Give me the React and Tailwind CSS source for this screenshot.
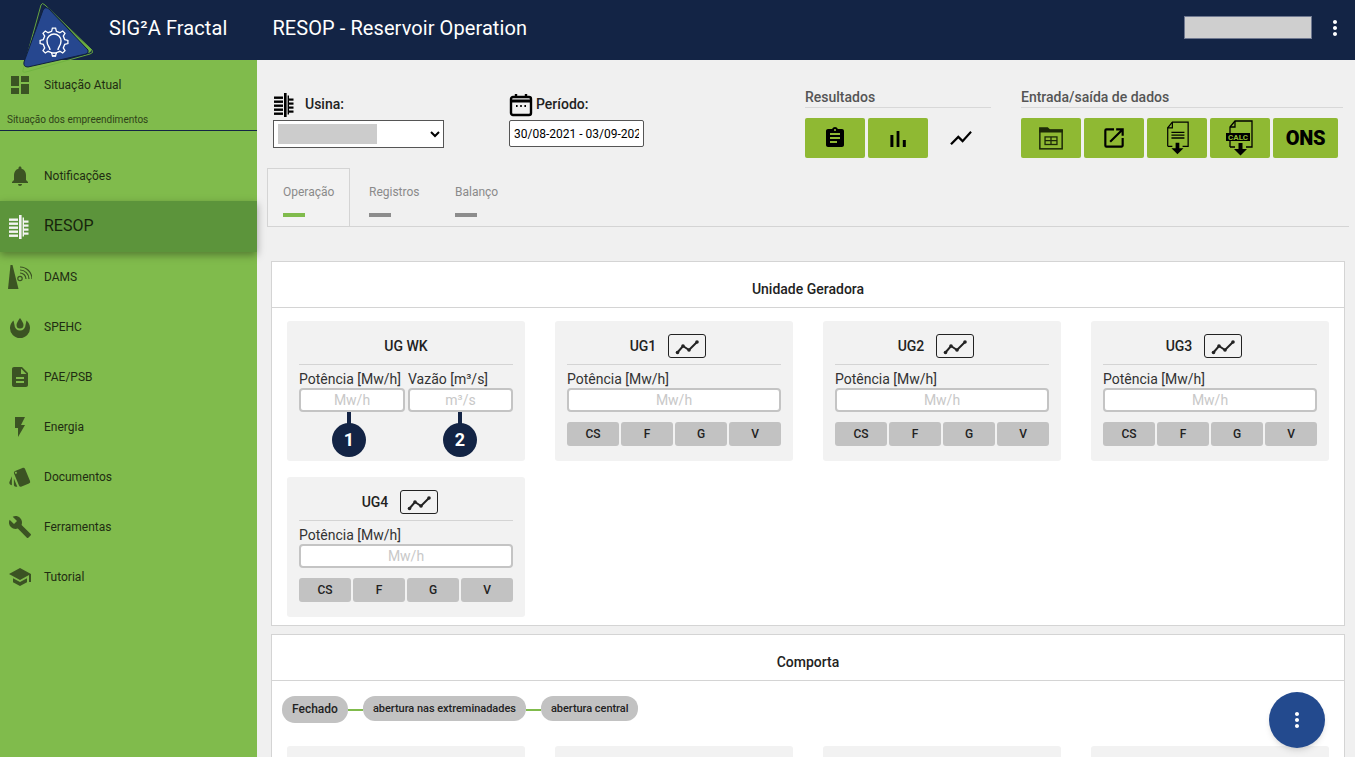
import React from "react";
import {
  MdDashboard,
  MdNotifications,
  MdDescription,
  MdFlashOn,
  MdStyle,
  MdBuild,
  MdSchool,
  MdMoreVert,
  MdAssignment,
  MdShowChart,
  MdOutlineOpenInNew,
} from "react-icons/md";

const ResopIcon = ({ className }) => (
  <svg viewBox="0 0 24 24" className={className} fill="currentColor">
    <rect x="11" y="0" width="2.6" height="24" />
    <rect x="14.6" y="2.5" width="1.4" height="19" />
    {[3.5, 7.5, 11.5, 15.5, 19.5].map((y) => (
      <rect key={y} x="1" y={y} width="9" height="2.4" />
    ))}
    {[5.5, 9.5, 13.5, 17.5].map((y) => (
      <rect key={y} x="16" y={y} width="4.5" height="2.2" />
    ))}
  </svg>
);

const DamsIcon = ({ className }) => (
  <svg viewBox="0 0 24 24" className={className} fill="none" stroke="currentColor">
    <path d="M2.5 0 L4.5 0 L10.5 24 L0 24 Z" fill="currentColor" stroke="none" />
    <circle cx="12" cy="13.5" r="2.2" strokeWidth="1.2" />
    <path d="M12 8 A6 6 0 0 1 18 14" strokeWidth="1.2" />
    <path d="M12 5 A9 9 0 0 1 21 14" strokeWidth="1.2" />
    <path d="M12 2 A12 12 0 0 1 24 14" strokeWidth="1.2" />
  </svg>
);

const SpehcIcon = ({ className }) => (
  <svg viewBox="0 0 24 24" className={className} fill="currentColor">
    <path d="M12 3 C14 6 15.5 8 15.5 10 A3.5 3.5 0 0 1 8.5 10 C8.5 8 10 6 12 3 Z" />
    <path d="M5.5 5.5 A10 10 0 1 0 18.5 5.5 L17.5 10 A5.5 5.5 0 1 1 6.5 10 Z" />
  </svg>
);

const CalendarIcon = ({ className }) => (
  <svg viewBox="0 0 24 24" className={className} fill="none" stroke="currentColor" strokeWidth="2.4">
    <rect x="2" y="4" width="20" height="18" rx="2" />
    <path d="M2 8 H22" strokeWidth="3" />
    <path d="M7 1 V5 M17 1 V5" />
    <path d="M7 13 H8.6 M11.2 13 H12.8 M15.4 13 H17" strokeWidth="2" />
  </svg>
);

const BarsIcon = ({ className }) => (
  <svg viewBox="0 0 24 24" className={className} fill="currentColor">
    <rect x="4.4" y="9" width="3" height="12" />
    <rect x="10.6" y="5" width="2.8" height="16" />
    <rect x="16.8" y="14" width="3" height="7" />
  </svg>
);

const FolderTableIcon = ({ className }) => (
  <svg viewBox="0 0 24 24" className={className} fill="none" stroke="currentColor">
    <path d="M1 2 H9 L11 4 H23 V7 H1 Z" fill="currentColor" stroke="none" />
    <rect x="1.7" y="5" width="20.6" height="17" strokeWidth="1.4" />
    <rect x="6.5" y="11" width="11" height="7" strokeWidth="1.2" />
    <path d="M6.5 14.5 H17.5 M12 11 V18" strokeWidth="1.2" />
  </svg>
);

const FileDownIcon = ({ className, calc }) => (
  <svg viewBox="0 0 28 36" className={className} fill="none" stroke="currentColor">
    <path d="M4 27 V7 L9 1 H26 V27 H20 M9 27 H4" strokeWidth="1.3" />
    <path d="M4 7 H9 V1" strokeWidth="1.3" />
    {calc ? (
      <>
        <rect x="0" y="13" width="24" height="8" fill="currentColor" stroke="none" />
        <text x="12" y="19.8" fontSize="8" fontWeight="700" fill="#8fb933" stroke="none" textAnchor="middle" fontFamily="Roboto, sans-serif">
          CALC
        </text>
      </>
    ) : (
      <path d="M8 12 H22 M8 15 H22 M8 18 H22" strokeWidth="1.4" />
    )}
    <path d="M12.5 23 H16.5 V29 H21 L14.5 35.5 L8 29 H12.5 Z" fill="currentColor" stroke="none" />
  </svg>
);

const LineBoxIcon = ({ className }) => (
  <svg viewBox="0 0 24 18" className={className} fill="currentColor">
    <path d="M2 16 L8 9 L14 13 L22 5" fill="none" stroke="currentColor" strokeWidth="2" />
    <circle cx="2.5" cy="15.5" r="1.8" />
    <circle cx="8" cy="9" r="1.8" />
    <circle cx="14" cy="13" r="1.8" />
    <circle cx="22" cy="5" r="1.8" />
  </svg>
);

const menu = [
  { label: "Notificações", Icon: MdNotifications },
  { label: "RESOP", Icon: ResopIcon, active: true },
  { label: "DAMS", Icon: DamsIcon },
  { label: "SPEHC", Icon: SpehcIcon },
  { label: "PAE/PSB", Icon: MdDescription },
  { label: "Energia", Icon: MdFlashOn },
  { label: "Documentos", Icon: MdStyle },
  { label: "Ferramentas", Icon: MdBuild },
  { label: "Tutorial", Icon: MdSchool },
];

function MenuItem({ label, Icon, active }) {
  if (active) {
    return (
      <div className="relative flex items-center h-[51px] bg-[#5c943b] shadow-[0_3px_8px_rgba(0,0,0,0.35)]">
        <div className="w-[44px] flex justify-center pr-[5px]">
          <Icon className="w-[24px] h-[24px] text-[#f4f4f4]" />
        </div>
        <span className="text-[16px] text-[#17240c] -mt-[1px]">{label}</span>
      </div>
    );
  }
  return (
    <div className="flex items-center h-[50px]">
      <div className="w-[38px] flex justify-center pl-[1px]">
        <Icon className="w-[24px] h-[24px] text-[#3b5323]" />
      </div>
      <span className="ml-[6px] text-[12px] text-[#1f2d12]">{label}</span>
    </div>
  );
}

function Sidebar() {
  return (
    <aside className="w-[257px] shrink-0 bg-[#80bb4c] flex flex-col">
      <div className="flex items-center h-[50px]">
        <div className="w-[38px] flex justify-center pl-[1px]">
          <MdDashboard className="w-[24px] h-[24px] text-[#3b5323]" />
        </div>
        <span className="ml-[6px] text-[12px] text-[#1f2d12]">Situação Atual</span>
      </div>
      <div className="h-[21px] pl-[7px] text-[10px] leading-[19px] text-[#2f4319] border-b border-[#132445]">
        Situação dos empreendimentos
      </div>
      <div className="mt-[20px]">
        {menu.map((item) => (
          <MenuItem key={item.label} {...item} />
        ))}
      </div>
    </aside>
  );
}

// contorno da engrenagem do logo
const gearPoints = () => {
  const pts = [];
  const teeth = 8;
  for (let i = 0; i < teeth; i++) {
    const a = (i / teeth) * Math.PI * 2;
    const step = Math.PI / teeth;
    [
      [-0.55, 11],
      [-0.3, 14],
      [0.3, 14],
      [0.55, 11],
    ].forEach(([d, r]) => {
      const ang = a + d * step;
      pts.push(`${(54 + Math.cos(ang) * r).toFixed(1)},${(42 + Math.sin(ang) * r).toFixed(1)}`);
    });
  }
  return pts.join(" ");
};

function Logo() {
  return (
    <svg viewBox="0 0 100 76" className="absolute left-0 top-0 w-[100px] h-[76px] z-10">
      <path d="M23 70 L41 5 Q42 2 45 5 L92 50 Q94 53 90 54 L26 72 Q22 73 23 70 Z" fill="none" stroke="#6fb33f" strokeWidth="0.9" />
      <path d="M46 8 L91 49 Q92 52 88 53 Z" fill="#6fb33f" />
      <path d="M24 62 L43 10 Q45 6 49 9 L88 50 Q89 53 86 54 L28 67 Q23 67 24 62 Z" fill="#26478f" stroke="#10203f" strokeWidth="1" />
      <polygon points={gearPoints()} fill="none" stroke="#ffffff" strokeWidth="1.3" />
      <g fill="none" stroke="#ffffff" strokeWidth="1.4">
        <path d="M50 50 C50 47 47 46 47 41 A7 7 0 0 1 61 41 C61 46 58 47 58 50" />
        <path d="M51 53 H57 M52 56 H56" />
      </g>
    </svg>
  );
}

function Header() {
  return (
    <header className="relative h-[60px] shrink-0 bg-[#132445] flex items-center text-white">
      <Logo />
      <span className="ml-[109px] text-[20px] tracking-[0.1px] -mt-[4px]">SIG²A Fractal</span>
      <span className="ml-[45px] text-[20px] tracking-[0.08px] -mt-[4px]">RESOP - Reservoir Operation</span>
      <div className="ml-auto -mt-[5px] w-[128px] h-[23px] bg-[#cfcfcf] border border-[#6f7890]" />
      <MdMoreVert className="w-[24px] h-[24px] ml-[11px] mr-[8px] -mt-[5px]" />
    </header>
  );
}

function GreenButton({ children, wide }) {
  return (
    <div className={`${wide ? "w-[65px]" : "w-[60px]"} h-[40px] bg-[#8fb933] rounded-[2px] flex items-center justify-center text-black`}>
      {children}
    </div>
  );
}

function Toolbar() {
  return (
    <div className="flex items-start pl-[16px] pt-[30px] h-[108px]">
      <div className="w-[236px]">
        <div className="flex items-center h-[30px]">
          <ResopIcon className="w-[24px] h-[24px] text-black" />
          <span className="ml-[8px] text-[14px] font-medium text-[#222] -mt-[2px]">Usina:</span>
        </div>
        <div className="relative w-[171px]">
          <select className="w-[171px] h-[28px] bg-white border border-[#555] text-[13px] pl-1 block">
            <option></option>
          </select>
          <div className="absolute left-[5px] top-[4px] w-[99px] h-[20px] bg-[#cccccc]" />
        </div>
      </div>
      <div className="w-[296px]">
        <div className="flex items-center h-[30px]">
          <CalendarIcon className="w-[24px] h-[26px] text-black" />
          <span className="ml-[3px] text-[14px] font-medium text-[#222] -mt-[2px]">Período:</span>
        </div>
        <input
          readOnly
          value="30/08-2021 - 03/09-2021"
          className="w-[135px] h-[27px] bg-white border border-[#555] rounded-[2px] text-[12px] pl-[4px] pr-[4px] text-black"
        />
      </div>
      <div className="w-[216px]">
        <div className="w-[186px] h-[18px] mb-[10px] border-b border-[#d8d8d8] text-[14px] leading-[15px] font-medium text-[#555]">
          Resultados
        </div>
        <div className="flex gap-[3px]">
          <GreenButton><MdAssignment className="w-[24px] h-[24px]" /></GreenButton>
          <GreenButton><BarsIcon className="w-[24px] h-[24px]" /></GreenButton>
          <div className="w-[60px] h-[40px] flex items-center justify-center text-black">
            <MdShowChart className="w-[26px] h-[26px]" />
          </div>
        </div>
      </div>
      <div className="w-[322px]">
        <div className="h-[18px] mb-[10px] border-b border-[#d8d8d8] text-[14px] leading-[15px] font-medium text-[#555]">
          Entrada/saída de dados
        </div>
        <div className="flex gap-[3px]">
          <GreenButton><FolderTableIcon className="w-[26px] h-[26px] text-[#1d2a08]" /></GreenButton>
          <GreenButton><MdOutlineOpenInNew className="w-[26px] h-[26px]" /></GreenButton>
          <GreenButton><FileDownIcon className="w-[26px] h-[34px]" /></GreenButton>
          <GreenButton><FileDownIcon calc className="w-[28px] h-[36px]" /></GreenButton>
          <GreenButton wide><span className="text-[20px] font-black tracking-[-0.3px]">ONS</span></GreenButton>
        </div>
      </div>
    </div>
  );
}

function Tab({ label, active }) {
  return (
    <div
      className={
        active
          ? "w-[83px] h-[58px] pl-[15px] pt-[16px] border border-b-0 border-[#d4d4d4] bg-[#f2f2f2] -mb-px relative"
          : "w-[86px] h-[58px] pl-[19px] pt-[17px]"
      }
    >
      <div className="text-[12px] leading-[15px] text-[#8a8a8a]">{label}</div>
      <div className={`w-[22px] h-[4px] mt-[13px] ${active ? "bg-[#80bb4c]" : "bg-[#8c8c8c]"}`} />
    </div>
  );
}

function Tabs() {
  return (
    <div className="flex ml-[10px] mr-[6px] border-b border-[#d4d4d4]">
      <Tab label="Operação" active />
      <Tab label="Registros" />
      <Tab label="Balanço" />
    </div>
  );
}

function UnitTile({ name }) {
  return (
    <div className="w-[238px] h-[140px] bg-[#f2f2f2] rounded-[3px] px-[12px]">
      <div className="h-[44px] flex items-center justify-center gap-[12px] border-b border-[#d4d4d4] pt-[6px] pr-[12px]">
        <span className="text-[14px] font-medium text-[#222] mt-[2px]">{name}</span>
        <div className="w-[38px] h-[24px] border border-[#222] rounded-[3px] flex items-center justify-center">
          <LineBoxIcon className="w-[24px] h-[18px] text-[#222]" />
        </div>
      </div>
      <div className="mt-[6px] text-[14px] leading-[16px] text-[#333]">Potência [Mw/h]</div>
      <div className="mt-[1px] h-[24px] bg-white border-2 border-[#c4c4c4] rounded-[4px] text-center text-[14px] leading-[20px] text-[#c8c8c8]">
        Mw/h
      </div>
      <div className="mt-[10px] grid grid-cols-4 gap-[2px]">
        {["CS", "F", "G", "V"].map((b) => (
          <div key={b} className="h-[24px] bg-[#c2c2c2] rounded-[3px] text-center text-[12px] leading-[24px] font-medium text-[#222]">
            {b}
          </div>
        ))}
      </div>
    </div>
  );
}

function Callout({ n, label, unit, className, markClass }) {
  return (
    <div className={`relative ${className}`}>
      <div className="mt-[6px] text-[14px] leading-[16px] text-[#333] whitespace-nowrap">{label}</div>
      <div className="mt-[1px] h-[24px] bg-white border-2 border-[#c4c4c4] rounded-[4px] text-center text-[14px] leading-[20px] text-[#c8c8c8]">
        {unit}
      </div>
      <div className={`absolute -translate-x-1/2 top-[47px] w-[4px] h-[14px] bg-[#132445] ${markClass}`} />
      <div className={`absolute -translate-x-1/2 top-[58px] w-[34px] h-[34px] rounded-full bg-[#132445] text-white text-[18px] font-bold leading-[34px] text-center ${markClass}`}>
        {n}
      </div>
    </div>
  );
}

function WkTile() {
  return (
    <div className="w-[238px] h-[140px] bg-[#f2f2f2] rounded-[3px] px-[12px]">
      <div className="h-[44px] flex items-center justify-center border-b border-[#d4d4d4] pt-[8px]">
        <span className="text-[14px] font-medium text-[#222]">UG WK</span>
      </div>
      <div className="flex gap-[3px]">
        <Callout n="1" label="Potência [Mw/h]" unit="Mw/h" className="w-[106px]" markClass="left-[50px]" />
        <Callout n="2" label="Vazão [m³/s]" unit="m³/s" className="w-[105px]" markClass="left-[52px]" />
      </div>
    </div>
  );
}

function Card({ title, children, className }) {
  return (
    <section className={`bg-white border border-[#d4d4d4] ml-[14px] mr-[10px] ${className}`}>
      <div className="h-[46px] border-b border-[#d4d4d4] flex items-center justify-center text-[14px] font-medium text-[#222] pt-[9px]">
        {title}
      </div>
      {children}
    </section>
  );
}

function Content() {
  return (
    <main className="flex-1 min-w-0 bg-[#f0f0f0] overflow-hidden">
      <Toolbar />
      <Tabs />
      <Card title="Unidade Geradora" className="mt-[34px] h-[365px]">
        <div className="pl-[15px] pt-[13px] flex flex-wrap gap-x-[30px] gap-y-[16px]">
          <WkTile />
          <UnitTile name="UG1" />
          <UnitTile name="UG2" />
          <UnitTile name="UG3" />
          <UnitTile name="UG4" />
        </div>
      </Card>
      <Card title="Comporta" className="mt-[8px]">
        <div className="pl-[10px] pt-[15px] flex items-start">
          <div className="h-[27px] px-[10px] bg-[#c2c2c2] rounded-[13px] text-[12px] leading-[26px] font-medium text-[#222]">Fechado</div>
          <div className="w-[15px] h-[2px] bg-[#80bb4c] mt-[13px]" />
          <div className="h-[25px] px-[10px] bg-[#c2c2c2] rounded-[12px] text-[11px] leading-[25px] font-medium text-[#222] tracking-[-0.03px]">abertura nas extreminadades</div>
          <div className="w-[15px] h-[2px] bg-[#80bb4c] mt-[13px]" />
          <div className="h-[25px] px-[10px] bg-[#c2c2c2] rounded-[12px] text-[11px] leading-[25px] font-medium text-[#222] tracking-[-0.04px]">abertura central</div>
        </div>
        <div className="pl-[15px] pt-[23px] flex gap-x-[30px]">
          {[0, 1, 2, 3].map((i) => (
            <div key={i} className="w-[238px] h-[140px] bg-[#f2f2f2] rounded-[3px]" />
          ))}
        </div>
      </Card>
    </main>
  );
}

export default function App() {
  return (
    <div className="h-[757px] overflow-hidden flex flex-col font-['Roboto',sans-serif] relative">
      <Header />
      <div className="flex flex-1 min-h-0">
        <Sidebar />
        <Content />
      </div>
      <button className="absolute left-[1269px] top-[692px] w-[56px] h-[56px] rounded-full bg-[#234a8e] text-white flex items-center justify-center shadow-md">
        <MdMoreVert className="w-[24px] h-[24px]" />
      </button>
    </div>
  );
}
